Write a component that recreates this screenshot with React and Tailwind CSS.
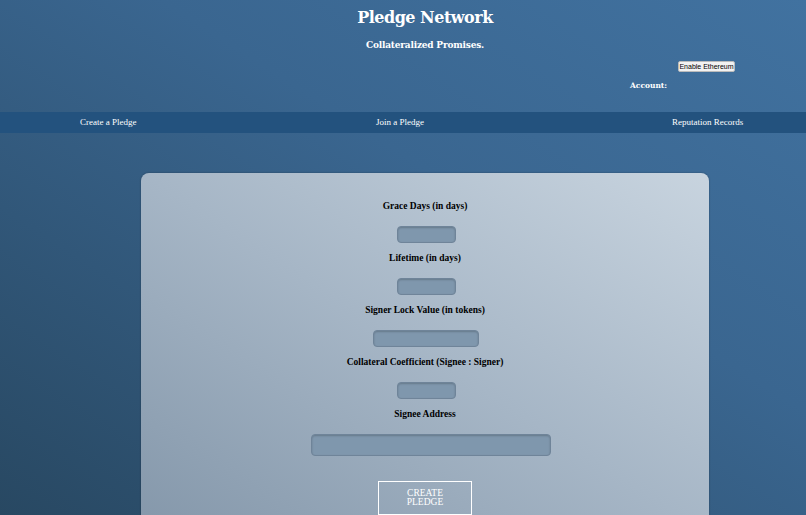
import React from "react";

const fields = [
  { label: "Grace Days (in days)", w: "w-[59px] ml-[3px]" },
  { label: "Lifetime (in days)", w: "w-[59px] ml-[3px]" },
  { label: "Signer Lock Value (in tokens)", w: "w-[106px] ml-[2px]" },
  { label: "Collateral Coefficient (Signee : Signer)", w: "w-[59px] ml-[3px]" },
];

function Field({ label, w, tall }) {
  return (
    <div className="flex flex-col items-center">
      <p className="h-[20px] leading-[20px] text-[9.5px] font-bold text-black">{label}</p>
      <input
        className={`${w} ${tall ? "h-[22px] mt-[10px]" : "h-[17px] mt-[10px]"} rounded-[4px] border border-[#6f8499] bg-[#7f97ad] shadow-[inset_0_1px_2px_rgba(0,0,0,0.2)] outline-none`}
      />
    </div>
  );
}

export default function App() {
  return (
    <div className="h-[515px] overflow-hidden bg-[linear-gradient(to_top_right,#284862,#3a6690_60%,#4172a0)] font-['Liberation_Serif',serif]">
      <div className="relative h-[112px]">
        <div className="pl-[44px] pt-[7px] text-center text-white">
          <h1 className="text-[16px] leading-[22px] font-bold font-['DejaVu_Serif',serif] tracking-[-0.5px]">Pledge Network</h1>
          <p className="mt-[10px] text-[9px] font-bold font-['DejaVu_Serif',serif] tracking-[-0.2px]">Collateralized Promises.</p>
        </div>
        <button className="absolute left-[678px] top-[61px] h-[11px] w-[57px] rounded-[2px] border border-[#bbb] bg-[#f2f2f2] text-[7px] leading-[9px] font-['Liberation_Sans',sans-serif] text-black">
          Enable Ethereum
        </button>
        <p className="absolute left-[630px] top-[80px] text-[7.5px] font-bold text-white font-['DejaVu_Serif',serif]">Account:</p>
      </div>

      <nav className="flex h-[21px] items-center bg-[#23527e] text-[9px] text-white">
        <span className="ml-[80px] w-[56px] whitespace-nowrap">Create a Pledge</span>
        <span className="ml-[240px] w-[47px] whitespace-nowrap">Join a Pledge</span>
        <span className="ml-[249px] whitespace-nowrap">Reputation Records</span>
      </nav>

      <div className="ml-[141px] mt-[40px] w-[568px] h-[360px] rounded-[8px] bg-[linear-gradient(to_top_right,#8497aa,#a6b6c6_50%,#c8d4df)] shadow-[0_0_2px_rgba(0,0,0,0.35)] pt-[23px]">
        <div className="flex flex-col items-center gap-[5px]">
          {fields.map((f) => (
            <Field key={f.label} label={f.label} w={f.w} />
          ))}
          <Field label="Signee Address" w="w-[240px] ml-[12px]" tall />
          <button className="mt-[20px] w-[94px] h-[34px] border border-white text-[9.5px] leading-[9px] text-white">
            CREATE
            <br />
            PLEDGE
          </button>
        </div>
      </div>
    </div>
  );
}
